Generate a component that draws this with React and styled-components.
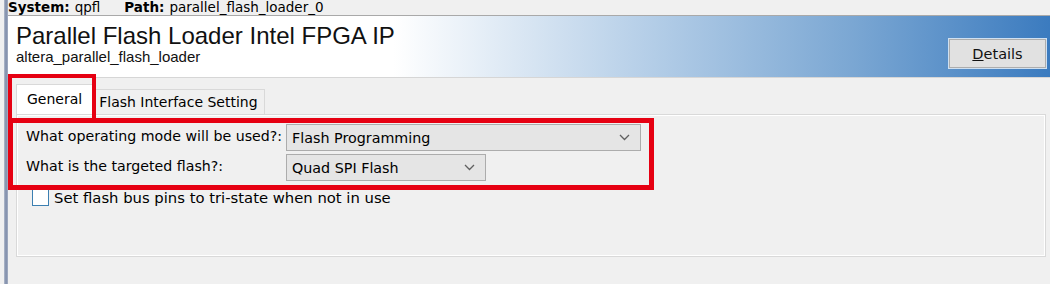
import React from 'react';
import styled, { createGlobalStyle } from 'styled-components';

const Global = createGlobalStyle`
  html, body { margin: 0; padding: 0; background: #f0f0f0; }
  body { font-family: "DejaVu Sans", sans-serif; color: #000; }
`;

const Window = styled.div`
  position: relative;
  display: flex;
  width: 1050px;
  height: 284px;
  overflow: hidden;
  background: #f0f0f0;
`;

const Edge = styled.div`
  width: 4px;
  margin-left: 4px;
  background: linear-gradient(to right, #b3bccc, #7d8ba8, #a6b0c4);
  flex: none;
`;

const Main = styled.div`
  flex: 1;
  display: flex;
  flex-direction: column;
`;

const PathBar = styled.div`
  height: 15px;
  display: flex;
  gap: 24px;
  font-size: 13.5px;
  line-height: 15px;
  white-space: nowrap;
`;

const PathItem = styled.span`
  b { font-weight: bold; margin-right: 5px; }
`;

const Banner = styled.div`
  height: 61px;
  border-top: 1px solid #a9a9a9;
  border-bottom: 1px solid #d6d6d6;
  background: linear-gradient(to right, #ffffff 0%, #ffffff 37%, #b6cfe8 61%, #7ba7d3 81%, #3b7bbf 100%);
  display: flex;
  align-items: flex-start;
  justify-content: space-between;
  padding-left: 8px;
  padding-right: 4px;
`;

const TitleBlock = styled.div`
  padding-top: 6px;
`;

const Title = styled.div`
  font-family: "Liberation Sans", sans-serif;
  font-size: 24px;
  line-height: 27px;
  color: #111;
`;

const Subtitle = styled.div`
  font-family: "Liberation Sans", sans-serif;
  font-size: 15px;
  line-height: 16px;
  color: #111;
`;

const DetailsButton = styled.button`
  margin-top: 23px;
  width: 97px;
  height: 29px;
  background: #e1e1e1;
  border: 1px solid #adadad;
  box-shadow: 0 0 0 1px #cfe0f1;
  font-family: "DejaVu Sans", sans-serif;
  font-size: 14.5px;
  color: #111;
  padding: 0;
  u { text-decoration: underline; }
`;

const TabArea = styled.div`
  padding: 6px 4px 0 8px;
  display: flex;
  flex-direction: column;
`;

const TabStrip = styled.div`
  display: flex;
  align-items: flex-end;
  height: 30px;
`;

const Tab = styled.div`
  height: ${p => (p.$active ? 30 : 25)}px;
  padding: 0 ${p => (p.$active ? 10 : 6)}px;
  background: ${p => (p.$active ? '#ffffff' : '#f0f0f0')};
  border: 1px solid #d9d9d9;
  border-bottom: none;
  box-sizing: border-box;
  font-size: 14px;
  line-height: ${p => (p.$active ? 28 : 25)}px;
  white-space: nowrap;
  margin-left: ${p => (p.$active ? 0 : -1)}px;
`;

const Panel = styled.div`
  height: 143px;
  box-sizing: border-box;
  border: 1px solid #d9d9d9;
  box-shadow: inset 1px 1px 0 #ffffff, inset -1px -1px 0 #ffffff;
  padding: 9px 9px;
`;

const Form = styled.div`
  display: grid;
  grid-template-columns: 260px auto;
  row-gap: 3px;
  align-items: center;
`;

const Label = styled.div`
  font-size: 14.2px;
  white-space: nowrap;
  align-self: start;
  padding-top: 4px;
`;

const Select = styled.div`
  width: ${p => p.$w}px;
  height: 27px;
  box-sizing: border-box;
  background: #e5e5e5;
  border: 1px solid #acacac;
  display: flex;
  align-items: center;
  justify-content: space-between;
  padding: 0 10px 0 5px;
  font-size: 14.3px;
`;

const Chevron = () => (
  <svg width="11" height="7" viewBox="0 0 11 7">
    <path d="M1 1 L5.5 5.5 L10 1" fill="none" stroke="#606060" strokeWidth="1.3" />
  </svg>
);

const CheckRow = styled.label`
  display: flex;
  align-items: center;
  gap: 5px;
  margin: 8px 0 0 6px;
  font-size: 14.8px;
`;

const Box = styled.span`
  width: 17px;
  height: 17px;
  box-sizing: border-box;
  border: 1px solid #3c7fb1;
  background: #fff;
  flex: none;
`;

const Mark = styled.div`
  position: absolute;
  left: ${p => p.$x}px;
  top: ${p => p.$y}px;
  width: ${p => p.$w}px;
  height: ${p => p.$h}px;
  box-sizing: border-box;
  border: ${p => p.$b}px solid #e60012;
  pointer-events: none;
`;

export default function App() {
  return (
    <>
      <Global />
      <Window>
        <Edge />
        <Main>
          <PathBar>
            <PathItem><b>System:</b>qpfl</PathItem>
            <PathItem><b>Path:</b>parallel_flash_loader_0</PathItem>
          </PathBar>
          <Banner>
            <TitleBlock>
              <Title>Parallel Flash Loader Intel FPGA IP</Title>
              <Subtitle>altera_parallel_flash_loader</Subtitle>
            </TitleBlock>
            <DetailsButton><u>D</u>etails</DetailsButton>
          </Banner>
          <TabArea>
            <TabStrip>
              <Tab $active>General</Tab>
              <Tab>Flash Interface Setting</Tab>
            </TabStrip>
            <Panel>
              <Form>
                <Label>What operating mode will be used?:</Label>
                <Select $w={355}>Flash Programming<Chevron /></Select>
                <Label>What is the targeted flash?:</Label>
                <Select $w={200}>Quad SPI Flash<Chevron /></Select>
              </Form>
              <CheckRow><Box />Set flash bus pins to tri-state when not in use</CheckRow>
            </Panel>
          </TabArea>
        </Main>
        <Mark $x={8} $y={74} $w={88} $h={48} $b={4} />
        <Mark $x={8} $y={118} $w={646} $h={72} $b={5} />
      </Window>
    </>
  );
}
